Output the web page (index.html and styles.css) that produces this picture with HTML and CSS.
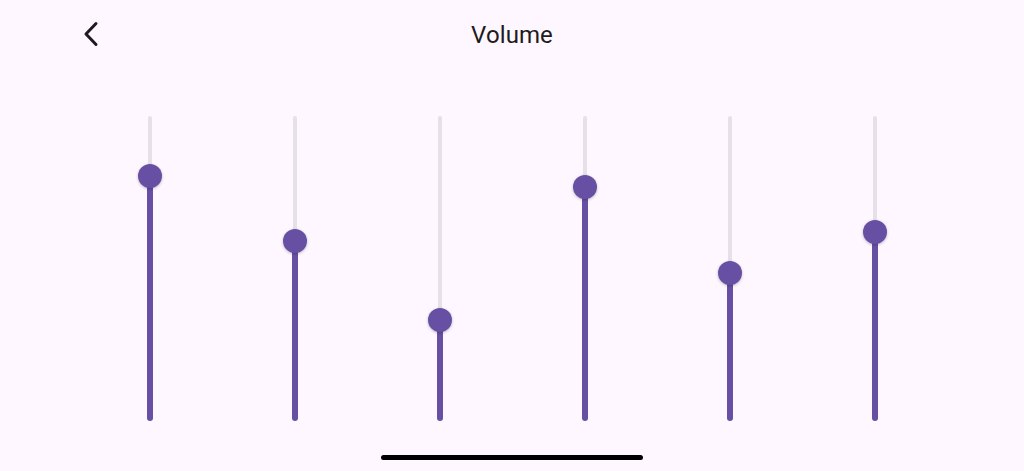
FILE: index.html
```html
<!DOCTYPE html>
<html lang="en">

<head>
    <meta charset="UTF-8">
    <meta name="viewport" content="width=device-width, initial-scale=1.0">
    <title>Volume</title>
    <link rel="stylesheet" href="styles.css">
</head>

<body>
    <div class="screen">
        <header class="topbar">
            <button class="back" aria-label="Back">
                <svg width="16" height="26" viewBox="0 0 16 26">
                    <path d="M13 2.5 L3 13 L13 23.5" fill="none" stroke="#1d1b20" stroke-width="3"
                        stroke-linecap="round" stroke-linejoin="round" />
                </svg>
            </button>
            <h1>Volume</h1>
            <span></span>
        </header>

        <div class="sliders">
            <div class="slider">
                <div class="track">
                    <div class="fill" style="height: 80.66%"></div>
                    <div class="thumb" style="bottom: 80.66%"></div>
                </div>
            </div>
            <div class="slider">
                <div class="track">
                    <div class="fill" style="height: 59.34%"></div>
                    <div class="thumb" style="bottom: 59.34%"></div>
                </div>
            </div>
            <div class="slider">
                <div class="track">
                    <div class="fill" style="height: 33.44%"></div>
                    <div class="thumb" style="bottom: 33.44%"></div>
                </div>
            </div>
            <div class="slider">
                <div class="track">
                    <div class="fill" style="height: 77.05%"></div>
                    <div class="thumb" style="bottom: 77.05%"></div>
                </div>
            </div>
            <div class="slider">
                <div class="track">
                    <div class="fill" style="height: 48.85%"></div>
                    <div class="thumb" style="bottom: 48.85%"></div>
                </div>
            </div>
            <div class="slider">
                <div class="track">
                    <div class="fill" style="height: 62.30%"></div>
                    <div class="thumb" style="bottom: 62.30%"></div>
                </div>
            </div>
        </div>

        <div class="home-bar"></div>
    </div>
</body>

</html>
```

FILE: styles.css
```css
* {
    margin: 0;
    padding: 0;
    box-sizing: border-box;
    font-family: Roboto, "Noto Sans", sans-serif;
}

body {
    background: #fef7ff;
    color: #1d1b20;
}

.screen {
    height: 471px;
    display: flex;
    flex-direction: column;
    align-items: center;
}

.topbar {
    width: 100%;
    height: 70px;
    display: grid;
    grid-template-columns: 1fr auto 1fr;
    align-items: center;
}

.topbar .back {
    justify-self: start;
    margin-left: 83px;
    margin-top: -2px;
    border: none;
    background: none;
    display: flex;
    cursor: pointer;
}

.topbar h1 {
    font-size: 24px;
    font-weight: 400;
    letter-spacing: 0.1px;
}

.sliders {
    display: flex;
    margin-top: 46px;
    height: 305px;
}

.slider {
    width: 145px;
    display: flex;
    justify-content: center;
}

.track {
    position: relative;
    width: 4px;
    height: 100%;
    border-radius: 2px;
    background: #e6e0e9;
}

.fill {
    position: absolute;
    left: -1px;
    bottom: 0;
    width: 6px;
    border-radius: 3px;
    background: #6750a4;
}

.thumb {
    position: absolute;
    left: 50%;
    width: 24px;
    height: 24px;
    margin-left: -12px;
    margin-bottom: -13px;
    border-radius: 50%;
    background: #6750a4;
    box-shadow: 0 1px 3px rgba(0, 0, 0, 0.25);
}

.home-bar {
    width: 262px;
    height: 5px;
    margin-top: 34px;
    border-radius: 3px;
    background: #000;
}
```
